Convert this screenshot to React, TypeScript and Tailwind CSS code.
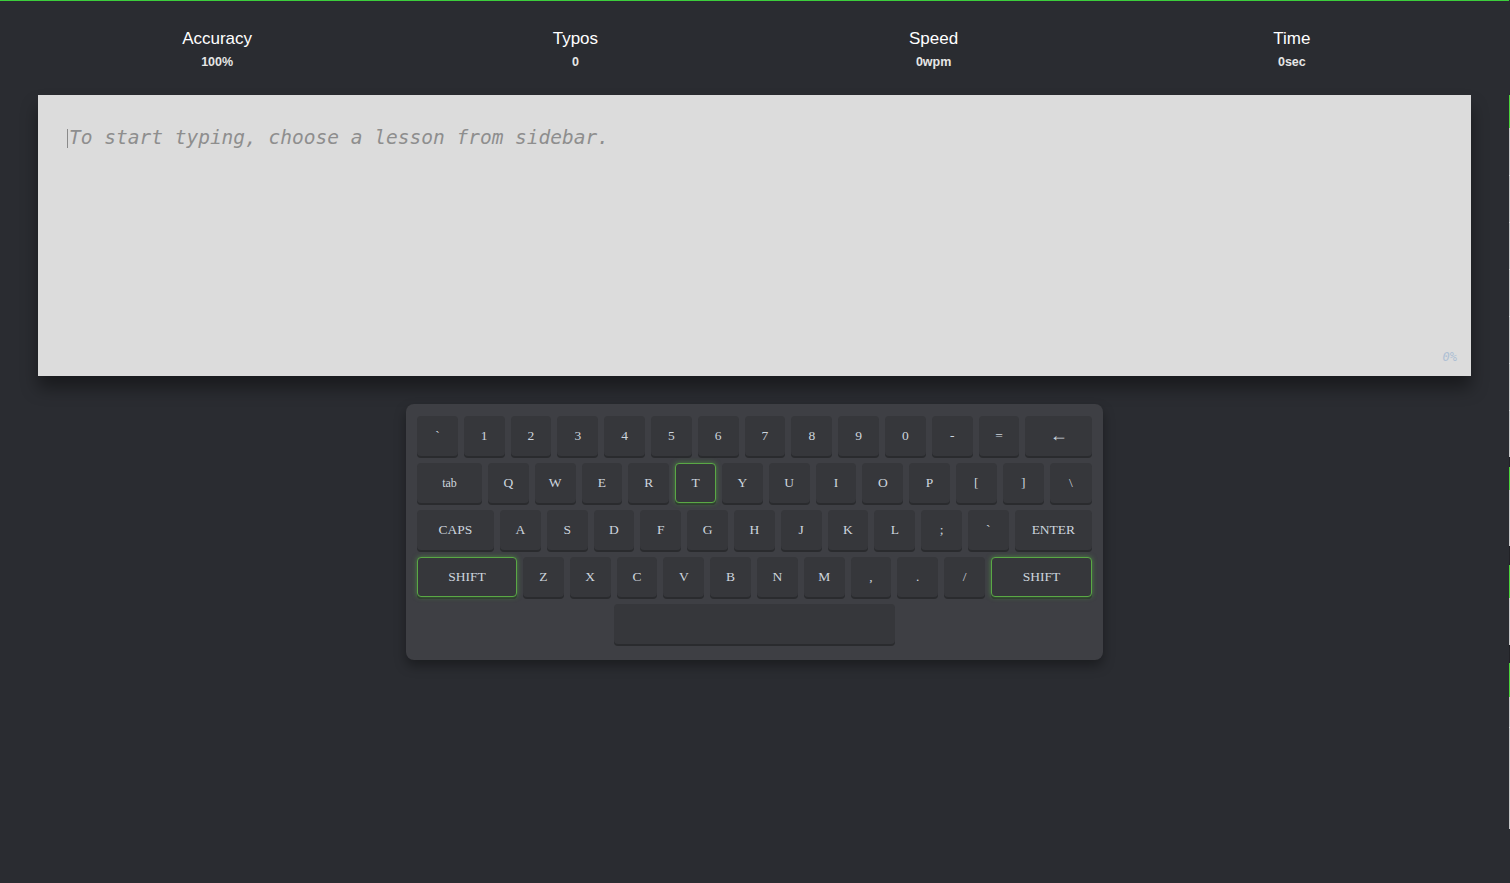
import React from "react";

type KeyDef = { label: string; w?: string; on?: boolean; small?: boolean; big?: boolean };

const rows: KeyDef[][] = [
	[
		{ label: "`" },
		{ label: "1" },
		{ label: "2" },
		{ label: "3" },
		{ label: "4" },
		{ label: "5" },
		{ label: "6" },
		{ label: "7" },
		{ label: "8" },
		{ label: "9" },
		{ label: "0" },
		{ label: "-" },
		{ label: "=" },
		{ label: "←", w: "flex-1", big: true },
	],
	[
		{ label: "tab", w: "w-[65px]", small: true },
		{ label: "Q" },
		{ label: "W" },
		{ label: "E" },
		{ label: "R" },
		{ label: "T", on: true },
		{ label: "Y" },
		{ label: "U" },
		{ label: "I" },
		{ label: "O" },
		{ label: "P" },
		{ label: "[" },
		{ label: "]" },
		{ label: "\\", w: "flex-1" },
	],
	[
		{ label: "CAPS", w: "w-[77px]" },
		{ label: "A" },
		{ label: "S" },
		{ label: "D" },
		{ label: "F" },
		{ label: "G" },
		{ label: "H" },
		{ label: "J" },
		{ label: "K" },
		{ label: "L" },
		{ label: ";" },
		{ label: "`" },
		{ label: "ENTER", w: "flex-1" },
	],
	[
		{ label: "SHIFT", w: "w-[100px]", on: true },
		{ label: "Z" },
		{ label: "X" },
		{ label: "C" },
		{ label: "V" },
		{ label: "B" },
		{ label: "N" },
		{ label: "M" },
		{ label: "," },
		{ label: "." },
		{ label: "/" },
		{ label: "SHIFT", w: "flex-1", on: true },
	],
];

const stats = [
	{ label: "Accuracy", value: "100%" },
	{ label: "Typos", value: "0" },
	{ label: "Speed", value: "0wpm" },
	{ label: "Time", value: "0sec" },
];

// sidebar sliver that peeks in at the right edge
const sidebar = [
	{ h: "h-[95px]", c: "bg-[#2a2c31]" },
	{ h: "h-[33px]", c: "bg-[#4cd43c]" },
	{ h: "h-[47px]", c: "bg-[#c9c9c9]" },
	{ h: "h-[1px]", c: "bg-[#e4e4e4]" },
	{ h: "h-[46px]", c: "bg-[#c9c9c9]" },
	{ h: "h-[1px]", c: "bg-[#e4e4e4]" },
	{ h: "h-[46px]", c: "bg-[#c9c9c9]" },
	{ h: "h-[1px]", c: "bg-[#e4e4e4]" },
	{ h: "h-[46px]", c: "bg-[#c9c9c9]" },
	{ h: "h-[1px]", c: "bg-[#e4e4e4]" },
	{ h: "h-[46px]", c: "bg-[#c9c9c9]" },
	{ h: "h-[1px]", c: "bg-[#e4e4e4]" },
	{ h: "h-[46px]", c: "bg-[#c9c9c9]" },
	{ h: "h-[1px]", c: "bg-[#e4e4e4]" },
	{ h: "h-[46px]", c: "bg-[#c9c9c9]" },
	{ h: "h-[10px]", c: "bg-[#222327]" },
	{ h: "h-[23px]", c: "bg-[#4cd43c]" },
	{ h: "h-[56px]", c: "bg-[#c9c9c9]" },
	{ h: "h-[19px]", c: "bg-[#222327]" },
	{ h: "h-[33px]", c: "bg-[#4cd43c]" },
	{ h: "h-[47px]", c: "bg-[#c9c9c9]" },
	{ h: "h-[18px]", c: "bg-[#222327]" },
	{ h: "h-[34px]", c: "bg-[#4cd43c]" },
	{ h: "h-[30px]", c: "bg-[#c9c9c9]" },
	{ h: "h-[1px]", c: "bg-[#e4e4e4]" },
	{ h: "h-[101px]", c: "bg-[#c9c9c9]" },
];

const Key = ({ k }: { k: KeyDef }) => {
	return (
		<div
			className={`${k.w ?? "w-[40.8px]"} h-[40px] shrink-0 flex items-center justify-center rounded-[4px] bg-[#36373b] text-[#cdd5de] ${
				k.small ? "text-[12px]" : k.big ? "text-[18px] leading-none pb-[3px]" : "text-[13.5px]"
			} ${
				k.on
					? "border border-[#5aa845] shadow-[0_0_5px_rgba(90,200,70,0.5),0_2px_0_#2a2b2e]"
					: "shadow-[0_2px_0_#2a2b2e]"
			}`}
			style={{ fontFamily: '"Liberation Serif", "Times New Roman", serif' }}
		>
			{k.label}
		</div>
	);
};

export default function App() {
	return (
		<div
			className="min-h-[883px] bg-[#2a2c31] flex"
			style={{ fontFamily: '"Liberation Sans", Arial, sans-serif' }}
		>
			<div className="flex-1 flex flex-col">
				<div className="h-[1px] bg-[#3ccf3c]"></div>
				<div className="grid grid-cols-4 px-[38px] pt-[28px]">
					{stats.map((s) => (
						<div key={s.label} className="flex flex-col items-center">
							<div className="text-[17px] leading-[20px] text-white">{s.label}</div>
							<div className="mt-[5px] text-[12.5px] leading-[16px] font-bold text-[#e6e6e6]">
								{s.value}
							</div>
						</div>
					))}
				</div>

				<div className="mx-[38px] mt-[25px] h-[281px] bg-[#dcdcdc] flex flex-col justify-between pl-[29px] pr-[14px] shadow-[0_12px_16px_rgba(0,0,0,0.4)]">
					<div
						className="pt-[29px] flex items-center text-[19.5px] leading-[28px] italic text-[#8e8e8e]"
						style={{ fontFamily: '"DejaVu Sans Mono", "Liberation Mono", monospace' }}
					>
						<span className="w-[1px] h-[19px] bg-[#8a8a8a] mr-[1px]"></span>
						<span>To start typing, choose a lesson from sidebar.</span>
					</div>
					<div
						className="self-end pb-[10px] text-[12px] italic text-[#aec0d4]"
						style={{ fontFamily: '"DejaVu Sans Mono", "Liberation Mono", monospace' }}
					>
						0%
					</div>
				</div>

				<div className="mt-[28px] self-center w-[697px] rounded-[8px] bg-[#3e3f44] px-[11px] pt-[12px] pb-[16px] flex flex-col gap-[7px] shadow-[0_6px_12px_rgba(0,0,0,0.35)]">
					{rows.map((row, i) => (
						<div key={i} className="flex gap-[6px]">
							{row.map((k, j) => (
								<Key key={j} k={k} />
							))}
						</div>
					))}
					<div className="flex justify-center">
						<div className="w-[281px] h-[40px] rounded-[4px] bg-[#36373b] shadow-[0_2px_0_#2a2b2e]"></div>
					</div>
				</div>
			</div>
			<div className="w-[1px] flex flex-col">
				{sidebar.map((s, i) => (
					<div key={i} className={`${s.h} ${s.c} shrink-0`}></div>
				))}
			</div>
		</div>
	);
}
